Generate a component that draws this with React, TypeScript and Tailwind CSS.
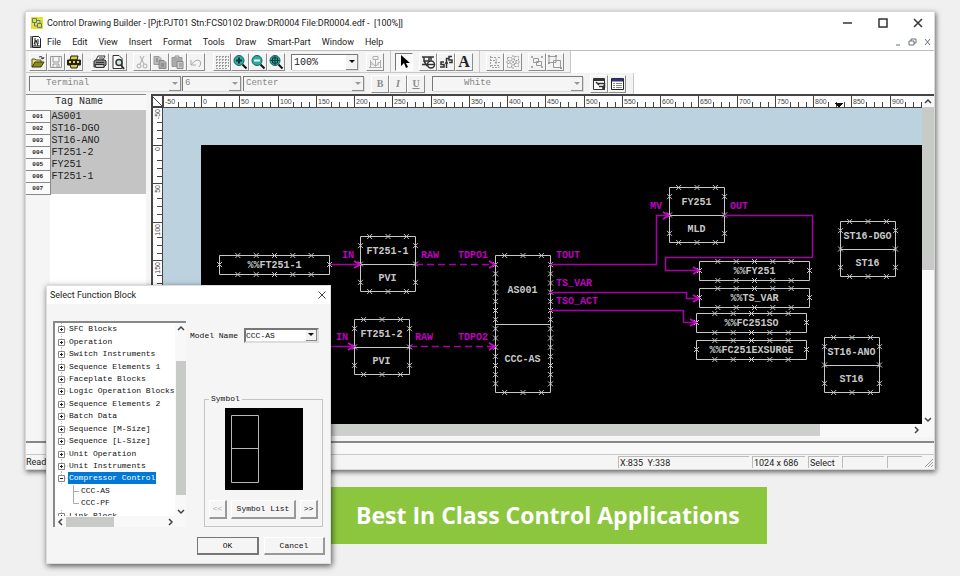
import { Fragment, useState } from "react";
import type { ReactNode } from "react";
import clsx from "clsx";

const MENUS = ["File", "Edit", "View", "Insert", "Format", "Tools", "Draw", "Smart-Part", "Window", "Help"];

const TAGS = ["AS001", "ST16-DGO", "ST16-ANO", "FT251-2", "FY251", "FT251-1", ""];

const TREE = [
    "SFC Blocks",
    "Operation",
    "Switch Instruments",
    "Sequence Elements 1",
    "Faceplate Blocks",
    "Logic Operation Blocks",
    "Sequence Elements 2",
    "Batch Data",
    "Sequence [M-Size]",
    "Sequence [L-Size]",
    "Unit Operation",
    "Unit Instruments",
    "Compressor Control",
    "Link Block",
];

/* ---------- Icons ---------- */

function Icon({ children }: { children: ReactNode }) {
    return (
        <svg width="16" height="16" viewBox="0 0 16 16" fill="none" stroke="#333" aria-hidden="true">
            {children}
        </svg>
    );
}

const OpenIcon = () => (
    <Icon>
        <path d="M2 13V5h3l1 1h5v2" fill="#e8e070" stroke="#5a5620" />
        <path d="M2 13l3-5h9l-3 5z" fill="#8a8a20" stroke="#3c3a10" />
        <path d="M9 3q3-2 4 2M11 4l2 1 1-2" />
    </Icon>
);

const SaveIcon = () => (
    <Icon>
        <path d="M2.5 2.5h11v11h-11z" stroke="#999" />
        <path d="M5 3v5h6V3M5 13v-3h6v3M9 11v2" stroke="#999" />
    </Icon>
);

const YellowPrintIcon = () => (
    <Icon>
        <path d="M5 2h7l-1 4H4z" fill="#d9cf2e" stroke="#222" />
        <path d="M1.5 6h13v5h-13z" fill="#222" stroke="#222" />
        <path d="M3 8h2M7 8h2M11 8h2" stroke="#e6dc3a" strokeWidth="2" />
        <path d="M4 10.5h8l-1 3.500H5z" fill="#d9cf2e" stroke="#222" />
    </Icon>
);

const PrintIcon = () => (
    <Icon>
        <path d="M6 2h7l-2 4H4z" fill="#fff" />
        <path d="M2 7l2-1h9l1 1v4l-2 2H2z" fill="#8a8a8a" />
        <path d="M3 10.5h9v3H4z" fill="#ccc" />
        <path d="M7 4h4M4 8.500h8" />
    </Icon>
);

const PreviewIcon = () => (
    <Icon>
        <path d="M3 1.5h6l3 3v10H3z" fill="#fff" />
        <circle cx="9" cy="8.5" r="3" fill="#cfe6e6" strokeWidth="1.5" />
        <path d="M11 11l3 4" strokeWidth="2" />
    </Icon>
);

const CutIcon = () => (
    <Icon>
        <path d="M6 2l4 8M10 2L6 10" stroke="#aaa" />
        <circle cx="5" cy="12" r="2" stroke="#aaa" />
        <circle cx="11" cy="12" r="2" stroke="#aaa" />
    </Icon>
);

const CopyIcon = () => (
    <Icon>
        <path d="M2 2.5h5l2 2v6H2z" fill="#bbb" stroke="#999" />
        <path d="M7 6.5h5l2 2v6H7z" fill="#aaa" stroke="#888" />
        <path d="M4 5h2M4 7h2M9 10h3M9 12h3" stroke="#777" />
    </Icon>
);

const PasteIcon = () => (
    <Icon>
        <path d="M2 3.5h10v9H2z" fill="#aaa" stroke="#999" />
        <path d="M5 2h4v2H5z" fill="#ddd" stroke="#999" />
        <path d="M7 7.5h6v7H7z" fill="#ccc" stroke="#888" />
        <path d="M9 10h3M9 12h3" stroke="#888" />
    </Icon>
);

const UndoIcon = () => (
    <Icon>
        <path d="M3 6v5h5M3 11q5-7 9-4q2 3-1 6" stroke="#aaa" />
    </Icon>
);

const GridIcon = () => (
    <Icon>
        <path
            d="M2.500 2v12M5.500 2v12M8.500 2v12M11.500 2v12M14.500 2v12M2 2.500h12M2 5.500h12M2 8.500h12M2 11.500h12M2 14.500h12"
            stroke="#999"
            strokeDasharray="2 1"
        />
    </Icon>
);

function ZoomIcon({ kind }: { kind: "in" | "out" | "fit" }) {
    return (
        <Icon>
            <circle cx="7" cy="6.5" r="5" fill="#2fa9a4" stroke="#17605e" />
            <path d="M10.500 10.500l4 4" stroke="#111" strokeWidth="2" />
            {kind === "in" && <path d="M4 6.500h6M7 3.500v6" stroke="#053838" strokeWidth="2" />}
            {kind === "out" && <path d="M4 6.500h6" stroke="#e2f6f6" strokeWidth="2" />}
            {kind === "fit" && <path d="M4.500 4h5v5h-5zM7 2v9M2.500 6.500h9" stroke="#053838" />}
        </Icon>
    );
}

const DownloadIcon = () => (
    <Icon>
        <path d="M3.500 6v8M13.500 6v8M2 13.500h13M8.500 6v6M6 5.500h5v-3H6zM3 8.500h2v3M13 8.500h-2v3M6 9.500l2.500 3 2.500-3" stroke="#b0b0b0" />
    </Icon>
);

const PointerIcon = () => (
    <Icon>
        <path d="M5 1v11l3-3 2 5 2-1-2-4h4z" fill="#000" stroke="none" />
    </Icon>
);

const BlockIcon = () => (
    <Icon>
        <path d="M2 3h12M4 3v4h5V3M2 10.500h5M11 3.500v3M4 7l3 5" strokeWidth="1.500" />
        <circle cx="11" cy="10.5" r="3.500" fill="#fff" strokeWidth="1.500" />
        <path d="M8 10.500h6" strokeWidth="1.500" />
    </Icon>
);

const WireIcon = () => (
    <Icon>
        <path d="M6 8H3v2.500h3V13H2M8.500 14V4.500H11M7 9h3M14 2.500h-3V6h3v2.500h-3" strokeWidth="1.500" />
    </Icon>
);

const AlignIcon = () => (
    <Icon>
        <path d="M3.500 2v12M4 3.500h5v3H4M4 11.500h8v2H4M8 8.500h6M10 6.500L8 8.500l2 2M11 3.500h3" stroke="#a0a0a0" strokeDasharray="2 1" />
    </Icon>
);

const DistributeIcon = () => (
    <Icon>
        <path d="M2.500 3.500h4v3h-4zM9.500 2.500h4v4h-4zM2.500 9.500h4v4h-4zM9.500 9.500h4v3h-4zM8 1v14M1 8h14" stroke="#a0a0a0" strokeDasharray="2 1" />
    </Icon>
);

const GroupIcon = () => (
    <Icon>
        <path d="M2 2h2v2H2zM12 2h2v2h-2zM2 12h2v2H2zM12 12h2v2h-2z" fill="#aaa" stroke="none" />
        <path d="M4.500 4.500h5v4h-5zM7.500 7.500h5v4h-5z" stroke="#999" />
    </Icon>
);

const UngroupIcon = () => (
    <Icon>
        <path d="M2 2.500h7v6H2zM6.500 6.500h7v7h-7z" stroke="#999" />
        <path d="M1 1h2v2H1zM13 13h2v2h-2zM8 1h2v2H8zM1 8h2v2H1z" fill="#999" stroke="none" />
    </Icon>
);

const DetailIcon = () => (
    <Icon>
        <path d="M2.500 2.500h11v11h-11z" fill="#fff" />
        <path d="M3 4h10" strokeWidth="2" />
        <path d="M6.500 7.500h7v4M8 10.500h4v2.500M5 6l3 3M13 9v5" strokeWidth="1.500" />
    </Icon>
);

const ListIcon = () => (
    <Icon>
        <path d="M2.500 2.500h12v11h-12z" fill="#fff" stroke="#222" />
        <path d="M3 4h11" stroke="#32327c" strokeWidth="3" />
        <path d="M4 7.500h2M7 7.500h6M4 9.500h2M7 9.500h6M4 11.500h2M7 11.500h6" stroke="#888" />
    </Icon>
);

/* ---------- Toolbar parts ---------- */

function ToolButton({ label, pressed, children }: { label: string; pressed?: boolean; children: ReactNode }) {
    return (
        <button
            type="button"
            aria-label={label}
            title={label}
            className={clsx(
                "flex h-[18px] w-[18px] items-center justify-center overflow-hidden border",
                pressed
                    ? "border-t-[#777] border-r-white border-b-white border-l-[#777] bg-[#fafafa]"
                    : "border-t-white border-r-[#8c8c8c] border-b-[#8c8c8c] border-l-white bg-[#f3f3f3]",
            )}
        >
            {children}
        </button>
    );
}

function Group({ children }: { children: ReactNode }) {
    return <div className="flex shrink-0">{children}</div>;
}

const Separator = () => <div className="w-px shrink-0 self-stretch bg-[#c8c8c8]" />;

type ComboProps = { label: string; value: string; className: string; selectClass?: string; disabled?: boolean };

function Combo({ label, value, className, selectClass, disabled }: ComboProps) {
    return (
        <div className={clsx("flex shrink-0 border-t border-l border-[#777] shadow-[1px_1px_0_#d8d8d8]", disabled ? "bg-[#f5f5f5]" : "bg-white", className)}>
            <select
                aria-label={label}
                disabled={disabled}
                className={clsx(
                    "min-w-0 flex-1 appearance-none bg-transparent opacity-100 outline-none",
                    disabled ? "text-[#858585]" : "text-[#222]",
                    selectClass,
                )}
            >
                <option>{value}</option>
            </select>
            <span className="flex w-[12px] items-center justify-center border-r border-b border-[#8c8c8c] bg-[#f3f3f3]">
                <svg width="6" height="4" viewBox="0 0 6 4" aria-hidden="true">
                    <path d="M0 0h6L3 3z" fill={disabled ? "#999" : "#111"} />
                </svg>
            </span>
        </div>
    );
}

/* ---------- Rulers ---------- */

const STEP = 38.25; // pixels per 50 drawing units

function HorizontalRuler() {
    const marks = Array.from({ length: 20 }, (_, i) => i - 1);
    return (
        <svg className="h-[12px] w-full bg-white font-['Liberation_Sans',sans-serif]" shapeRendering="crispEdges">
            {marks.map((m) => {
                const x = Math.round(38 + m * STEP);
                return (
                    <g key={m} stroke="#444">
                        <path d={`M${x + 0.5} 0v12`} />
                        {[2, 3, 4].map((t) => (
                            <path key={t} d={`M${x + Math.round((t * STEP) / 5) + 0.5} 6v6`} />
                        ))}
                        <text x={x + 2} y="8" fontSize="7" fill="#444" stroke="none">
                            {m * 50}
                        </text>
                    </g>
                );
            })}
            <path d="M0 11.500h4000" stroke="#444" />
            <path d="M672 7h8l-4 5z" fill="#111" />
        </svg>
    );
}

function VerticalRuler() {
    const marks = Array.from({ length: 8 }, (_, i) => i - 1);
    return (
        <svg className="h-full w-[12px] border-l-2 border-[#444] bg-white font-['Liberation_Sans',sans-serif]" shapeRendering="crispEdges">
            {marks.map((m) => {
                const y = Math.round(38 + m * STEP);
                return (
                    <g key={m} stroke="#444">
                        <path d={`M0 ${y + 0.5}h10`} />
                        {[2, 3, 4].map((t) => (
                            <path key={t} d={`M4 ${y + Math.round((t * STEP) / 5) + 0.5}h6`} />
                        ))}
                        <text transform={`translate(7 ${y + 2}) rotate(-90)`} textAnchor="end" fontSize="7" fill="#444" stroke="none">
                            {m * 50}
                        </text>
                    </g>
                );
            })}
            <path d="M9.500 0v1000" stroke="#444" />
        </svg>
    );
}

/* ---------- Control drawing ---------- */

const UNIT = 55 / 6; // distance between terminals

function Terminals({ points }: { points: number[][] }) {
    return <path d={points.map(([x, y]) => `M${x - 2.5} ${y - 2.5}l5 5M${x + 2.5} ${y - 2.5}l-5 5`).join("")} stroke="#c8c8c8" />;
}

function Label({ x, y, children }: { x: number; y: number; children: string }) {
    return (
        <text x={x} y={y} textAnchor="middle" fill="#c8c8c8">
            {children}
        </text>
    );
}

type BlockProps = { x: number; y: number; name: string; model: string; h?: number; split?: number; pins?: number[] };

function Block({ x, y, name, model, h = 55, split = 28, pins = [1, 3, 5] }: BlockProps) {
    const points = [
        ...[1, 3, 5].flatMap((n) => [
            [x + n * UNIT, y],
            [x + n * UNIT, y + h],
        ]),
        ...pins.flatMap((n) => [
            [x, y + n * UNIT],
            [x + 55, y + n * UNIT],
        ]),
    ];
    return (
        <g>
            <path d={`M${x} ${y}h55v${h}h-55zM${x} ${y + split}h55`} stroke="#c8c8c8" />
            <Terminals points={points} />
            <Label x={x + 27} y={y + split / 2 + 3}>
                {name}
            </Label>
            <Label x={x + 27} y={y + (split + h) / 2 + 3}>
                {model}
            </Label>
        </g>
    );
}

function Link({ x, y, name }: { x: number; y: number; name: string }) {
    const points = [
        ...[2, 4, 6, 8, 10].flatMap((n) => [
            [x + n * UNIT, y],
            [x + n * UNIT, y + 19],
        ]),
        [x, y + 9],
        [x + 110, y + 9],
    ];
    return (
        <g>
            <path d={`M${x} ${y}h110v19h-110z`} stroke="#c8c8c8" />
            <Terminals points={points} />
            <Label x={x + 55} y={y + 12}>
                {name}
            </Label>
        </g>
    );
}

const WIRES = [
    "M129 119.500H159",
    "M120 201.500H153",
    "M349 119.500H455.500V70.500H468",
    "M523 70.500H611.500V112.500H464.500V125.500H498",
    "M349 147.500H485.500V153.500H498",
    "M349 165.500H482.500V177.500H495",
];

const ARROWS = [
    [159, 119],
    [153, 201],
    [294, 119],
    [294, 201],
    [468, 70],
    [498, 125],
    [498, 153],
    [495, 177],
];

const SIGNALS: [number, number, string][] = [
    [141, 113, "IN"],
    [135, 195, "IN"],
    [220, 113, "RAW"],
    [214, 195, "RAW"],
    [257, 113, "TDPO1"],
    [257, 195, "TDPO2"],
    [355, 113, "TOUT"],
    [355, 141, "TS_VAR"],
    [355, 159, "TSO_ACT"],
    [449, 64, "MV"],
    [529, 64, "OUT"],
];

function Drawing() {
    return (
        <svg
            className="block h-[279px] w-full bg-black font-['Liberation_Mono',monospace] text-[10px] font-bold"
            fill="none"
            role="img"
            aria-label="Control drawing DR0004"
        >
            <Link x={18.5} y={110.5} name="%%FT251-1" />
            <Block x={159.5} y={91.5} name="FT251-1" model="PVI" />
            <Block x={153.5} y={174.5} name="FT251-2" model="PVI" />
            <Block x={294.5} y={110.5} h={137} split={69} pins={[1, 2, 3, 4, 5, 6, 7, 8, 9, 10, 11, 12, 13, 14]} name="AS001" model="CCC-AS" />
            <Block x={468.5} y={42.5} name="FY251" model="MLD" />
            <Block x={639.5} y={76.5} name="ST16-DGO" model="ST16" />
            <Block x={623.5} y={192.5} name="ST16-ANO" model="ST16" />
            <Link x={498.5} y={116.5} name="%%FY251" />
            <Link x={498.5} y={143.5} name="%%TS_VAR" />
            <Link x={495.5} y={168.5} name="%%FC251SO" />
            <Link x={495.5} y={195.5} name="%%FC251EXSURGE" />
            <g stroke="#a800a8" strokeWidth="1.5">
                {WIRES.map((d) => (
                    <path key={d} d={d} />
                ))}
                <path d="M215 119.500H294M209 201.500H294" strokeDasharray="7 4" />
                {ARROWS.map(([x, y]) => (
                    <path key={`${x}-${y}`} d={`M${x - 6} ${y - 3}l6 3.500l-6 3.500`} stroke="#d800d8" />
                ))}
            </g>
            <g fill="#c000c0">
                {SIGNALS.map(([x, y, text]) => (
                    <text key={`${x}-${y}`} x={x} y={y}>
                        {text}
                    </text>
                ))}
            </g>
        </svg>
    );
}

/* ---------- Scroll arrows ---------- */

const ARROW_PATHS = {
    up: "M1 5l3-3 3 3",
    down: "M1 3l3 3 3-3",
    left: "M5 1L2 4l3 3",
    right: "M3 1l3 3-3 3",
};

function ScrollArrow({ dir }: { dir: keyof typeof ARROW_PATHS }) {
    return (
        <button type="button" aria-label={`Scroll ${dir}`} className="flex h-[11px] w-[11px] shrink-0 items-center justify-center">
            <svg width="8" height="8" viewBox="0 0 8 8" fill="none" stroke="#444" strokeWidth="1.5" aria-hidden="true">
                <path d={ARROW_PATHS[dir]} />
            </svg>
        </button>
    );
}

/* ---------- Main window ---------- */

function TitleBar() {
    return (
        <header>
            <div className="flex h-[22px] items-center pr-[10px] pl-[5px]">
                <svg width="12" height="12" viewBox="0 0 12 12" aria-hidden="true">
                    <path d="M0 0h12v12H0z" fill="#e6e02c" />
                    <path d="M1.500 1.500h4v4h-4zM6.500 6.500h4v4h-4zM3.500 6v3h3M6 3.500h3v3" fill="none" stroke="#5a7a8a" />
                </svg>
                <h1 className="ml-[4px] flex-1 text-[9px] leading-[14px] whitespace-nowrap text-[#222]">
                    Control Drawing Builder - [Pjt:PJT01 Stn:FCS0102 Draw:DR0004 File:DR0004.edf -&nbsp; [100%]]
                </h1>
                <div className="flex gap-[23px]">
                    {["M1 6h9", "M2 2h8v8H2z", "M2 2l8 8M10 2l-8 8"].map((d, i) => (
                        <button key={d} type="button" aria-label={["Minimize", "Maximize", "Close"][i]}>
                            <svg width="12" height="12" viewBox="0 0 12 12" fill="none" stroke="#333" strokeWidth="1.5">
                                <path d={d} />
                            </svg>
                        </button>
                    ))}
                </div>
            </div>
            <nav className="flex h-[17px] items-center border-b border-[#c0c0c0] pl-[4px]">
                <svg width="12" height="14" viewBox="0 0 12 14" fill="none" stroke="#222" aria-hidden="true">
                    <path d="M2.500 1.500h6l2 2v9h-8zM1 1v12M4 9l2-4 2 6M5 3v8M8 4v5M3 11h7" />
                </svg>
                <div className="ml-[5px] flex flex-1 gap-[11px] text-[9px] leading-[12px] text-[#222]">
                    {MENUS.map((menu) => (
                        <button key={menu} type="button" className="whitespace-nowrap">
                            {menu}
                        </button>
                    ))}
                </div>
                <div className="flex gap-[3px]">
                    {["M4 9h4", "M2 5h5v4H2zM4 5V3h5v4H7", "M3 3l5 6M8 3l-5 6"].map((d, i) => (
                        <button key={d} type="button" aria-label={["Minimize drawing", "Restore drawing", "Close drawing"][i]}>
                            <svg width="12" height="12" viewBox="0 0 12 12" fill="none" stroke="#66737c">
                                <path d={d} />
                            </svg>
                        </button>
                    ))}
                </div>
            </nav>
        </header>
    );
}

function Toolbars() {
    return (
        <div className="font-['Liberation_Mono',monospace]">
            <div className="flex">
                <div className="flex h-[22px] items-center border-b border-[#c8c8c8] bg-[#f3f3f3] pl-[3px]">
                    <Group>
                        <ToolButton label="Open"><OpenIcon /></ToolButton>
                        <ToolButton label="Save"><SaveIcon /></ToolButton>
                        <ToolButton label="Print drawing"><YellowPrintIcon /></ToolButton>
                    </Group>
                    <div className="w-2" />
                    <Group>
                        <ToolButton label="Print"><PrintIcon /></ToolButton>
                        <ToolButton label="Preview"><PreviewIcon /></ToolButton>
                    </Group>
                    <div className="w-[6px]" />
                    <Group>
                        <ToolButton label="Cut"><CutIcon /></ToolButton>
                        <ToolButton label="Copy"><CopyIcon /></ToolButton>
                        <ToolButton label="Paste"><PasteIcon /></ToolButton>
                        <ToolButton label="Undo"><UndoIcon /></ToolButton>
                    </Group>
                    <div className="w-2" />
                    <Group>
                        <ToolButton label="Grid"><GridIcon /></ToolButton>
                        <ToolButton label="Zoom in"><ZoomIcon kind="in" /></ToolButton>
                        <ToolButton label="Zoom out"><ZoomIcon kind="out" /></ToolButton>
                        <ToolButton label="Zoom to fit"><ZoomIcon kind="fit" /></ToolButton>
                    </Group>
                    <div className="w-[6px]" />
                    <Combo label="Zoom" value="100%" className="h-[16px] w-[67px]" selectClass="pl-[2px] text-[10px]" />
                    <div className="w-2" />
                    <ToolButton label="Download"><DownloadIcon /></ToolButton>
                    <div className="w-[6px]" />
                    <Separator />
                    <div className="w-[4px]" />
                    <ToolButton label="Select" pressed><PointerIcon /></ToolButton>
                    <div className="w-[6px]" />
                    <Group>
                        <ToolButton label="Function block"><BlockIcon /></ToolButton>
                        <ToolButton label="Wiring"><WireIcon /></ToolButton>
                        <ToolButton label="Text">
                            <span className="font-['Liberation_Serif',serif] text-[16px] leading-[16px] font-bold text-[#222]">A</span>
                        </ToolButton>
                    </Group>
                    <div className="w-[6px]" />
                    <Separator />
                    <div className="w-[6px]" />
                    <Group>
                        <ToolButton label="Align"><AlignIcon /></ToolButton>
                        <ToolButton label="Distribute"><DistributeIcon /></ToolButton>
                    </Group>
                    <div className="w-[6px]" />
                    <Group>
                        <ToolButton label="Group"><GroupIcon /></ToolButton>
                        <ToolButton label="Ungroup"><UngroupIcon /></ToolButton>
                    </Group>
                    <div className="w-[6px]" />
                    <Separator />
                </div>
            </div>
            <div className="flex">
                <div className="flex h-[21px] items-center bg-[#f3f3f3] pl-[3px] text-[9px]">
                    <Combo disabled label="Text style" value="Terminal" className="h-[15px] w-[152px]" selectClass="pl-4" />
                    <div className="w-px" />
                    <Combo disabled label="Text size" value="6" className="h-[15px] w-[59px]" selectClass="pl-[2px]" />
                    <div className="w-[2px]" />
                    <Combo disabled label="Alignment" value="Center" className="h-[15px] w-[121px]" selectClass="pl-[2px]" />
                    <div className="w-[7px]" />
                    <Group>
                        <ToolButton label="Bold"><span className="font-['Liberation_Serif',serif] text-[10px] font-bold text-[#8c8c8c]">B</span></ToolButton>
                        <ToolButton label="Italic"><span className="font-['Liberation_Serif',serif] text-[10px] font-bold text-[#8c8c8c] italic">I</span></ToolButton>
                        <ToolButton label="Underline"><span className="font-['Liberation_Serif',serif] text-[10px] font-bold text-[#8c8c8c] underline">U</span></ToolButton>
                    </Group>
                    <div className="w-[7px]" />
                    <Combo disabled label="Text colour" value="White" className="h-[15px] w-[151px]" selectClass="pl-[31px]" />
                    <div className="w-[7px]" />
                    <Group>
                        <ToolButton label="Details"><DetailIcon /></ToolButton>
                        <ToolButton label="Tag list"><ListIcon /></ToolButton>
                    </Group>
                    <div className="w-[7px]" />
                    <Separator />
                </div>
            </div>
        </div>
    );
}

function TagPane() {
    return (
        <aside className="w-[120px] shrink-0 border-t border-[#888] bg-linear-to-r from-[#f5f5f5] from-20% to-white to-20% font-['Liberation_Mono',monospace] text-[10px] text-[#222]">
            <table className="w-full border-collapse">
                <thead>
                    <tr className="h-[15px] bg-[#f8f8f8] leading-[12px]">
                        <th colSpan={2} className="p-0 pr-[14px] text-center font-normal">Tag Name</th>
                    </tr>
                </thead>
                <tbody>
                    {TAGS.map((tag, i) => (
                        <tr key={i} className="h-[12px] leading-[11px]">
                            <th scope="row" className="w-[24px] border-y border-r border-[#888] bg-[#fafafa] p-0 text-center text-[6px]">
                                {String(i + 1).padStart(3, "0")}
                            </th>
                            <td className="bg-[#c4c4c4] p-0 pl-px">{tag}</td>
                        </tr>
                    ))}
                </tbody>
            </table>
        </aside>
    );
}

function MainWindow() {
    return (
        <section className="border border-[#d8d8d8] bg-white font-['Roboto',sans-serif] shadow-[1px_2px_5px_rgba(0,0,0,0.6)]">
            <TitleBar />
            <Toolbars />
            <div className="flex bg-[#f5f5f5]">
                <TagPane />
                <div className="ml-[5px] flex min-w-0 flex-1 flex-col border-t-2 border-[#444]">
                    <div className="flex">
                        <div className="flex w-[12px] shrink-0 flex-col">
                            <svg className="h-[11px] w-[12px] border-l-2 border-[#444] bg-white" viewBox="0 0 10 11" stroke="#444" fill="none" aria-hidden="true">
                                <path d="M0 1l9 9M9.500 0v11M0 10.500h10" />
                            </svg>
                            <div className="h-0 min-h-0 flex-1">
                                <VerticalRuler />
                            </div>
                        </div>
                        <div className="flex min-w-0 flex-1 flex-col">
                            <HorizontalRuler />
                            <div className="bg-[#bcd2df] pt-[37px] pl-[38px]">
                                <Drawing />
                            </div>
                        </div>
                        <div className="flex w-[12px] shrink-0 flex-col items-center bg-[#f8f8f8]">
                            <ScrollArrow dir="up" />
                            <div className="h-[163px] w-full bg-[#c8cac8]" />
                            <div className="flex-1" />
                            <ScrollArrow dir="down" />
                        </div>
                    </div>
                    <div className="flex h-[13px] bg-[#f8f8f8] pr-[13px]">
                        <ScrollArrow dir="left" />
                        <div className="flex-1">
                            <div className="h-[12px] w-[88%] bg-[#cdcfcd]" />
                        </div>
                        <ScrollArrow dir="right" />
                    </div>
                    <div className="h-[4px]" />
                </div>
            </div>
            <div className="h-[13px] border-t-2 border-[#888] bg-[#f8f8f8]" />
            <footer className="flex h-[15px] items-center gap-[3px] border-t border-[#c8c8c8] bg-[#f5f5f5] pr-[1px] text-[9px] leading-[12px] text-[#222]">
                <span className="flex-1">Ready</span>
                <span className="h-[12px] w-[131px] border-t border-l border-[#bbb] pl-px">X:835&nbsp; Y:338</span>
                <span className="h-[12px] w-[53px] border-t border-l border-[#bbb] pl-px whitespace-nowrap">1024 x 686</span>
                <span className="h-[12px] w-[31px] border-t border-l border-[#bbb] pl-px">Select</span>
                <span className="h-[12px] w-[42px] border-t border-l border-[#bbb]" />
                <span className="h-[12px] w-[35px] border-t border-l border-[#bbb]" />
                <svg width="8" height="10" viewBox="0 0 8 10" stroke="#999" aria-hidden="true">
                    <path d="M0 10l8-8M3 10l5-5M6 10l2-2" />
                </svg>
            </footer>
        </section>
    );
}

/* ---------- Select Function Block dialog ---------- */

function TreeToggle({ open }: { open: boolean }) {
    return (
        <svg className="shrink-0" width="12" height="12" viewBox="0 0 12 12" fill="none" stroke="#888" aria-hidden="true">
            <path d="M5.500 0v3M5.500 9v3M9 6h3" stroke="#bbb" strokeDasharray="1 1" />
            <path d="M2.500 3.500h6v6h-6z" />
            <path d={open ? "M4 6.500h3" : "M4 6.500h3M5.500 5v3"} stroke="#222" />
        </svg>
    );
}

type TreeProps = { model: string; onSelect: (model: string) => void };

function FunctionTree({ model, onSelect }: TreeProps) {
    return (
        <div className="flex h-[206px] w-[133px] shrink-0 flex-col border-t-2 border-l-2 border-[#888] bg-white">
            <div className="flex min-h-0 flex-1">
                <div className="min-w-0 flex-1 overflow-hidden">
                    <ul className="grid h-[199px] auto-rows-fr pl-px leading-[12px]">
                        {TREE.map((name) => {
                            const open = name === "Compressor Control";
                            return (
                                <Fragment key={name}>
                                    <li className="flex items-center">
                                        <TreeToggle open={open} />
                                        <button type="button" className={clsx("px-px whitespace-nowrap", open && "bg-[#0078d7] text-white")}>
                                            {name}
                                        </button>
                                    </li>
                                    {open &&
                                        ["CCC-AS", "CCC-PF"].map((child) => (
                                            <li key={child} className="flex items-center pl-[16px]">
                                                <svg width="9" height="12" viewBox="0 0 9 12" fill="none" stroke="#aaa" aria-hidden="true">
                                                    <path d={child === "CCC-PF" ? "M1.500 0v6.500H7" : "M1.500 0v12M2 6.500h5"} />
                                                </svg>
                                                <button type="button" aria-pressed={child === model} onClick={() => onSelect(child)}>
                                                    {child}
                                                </button>
                                            </li>
                                        ))}
                                </Fragment>
                            );
                        })}
                    </ul>
                </div>
                <div className="flex w-[11px] flex-col items-center bg-[#f8f8f8]">
                    <ScrollArrow dir="up" />
                    <div className="flex-1" />
                    <div className="h-[134px] w-[10px] bg-[#c8cac8]" />
                    <div className="h-[10px]" />
                    <ScrollArrow dir="down" />
                </div>
            </div>
            <div className="flex h-[11px] items-center bg-[#f8f8f8] pr-[11px]">
                <ScrollArrow dir="left" />
                <div className="h-[10px] w-[48px] bg-[#c8cac8]" />
                <div className="flex-1" />
                <ScrollArrow dir="right" />
            </div>
        </div>
    );
}

const RAISED = "border-t border-l border-r-2 border-b-2 border-t-white border-l-white border-r-[#999] border-b-[#999] bg-[#f5f5f5]";

function SelectBlockDialog() {
    const [model, setModel] = useState("CCC-AS");

    return (
        <section
            role="dialog"
            aria-labelledby="dialog-title"
            className="absolute top-[285px] left-[46px] w-[285px] border border-[#ddd] bg-[#f5f5f5] pb-[8px] font-['Liberation_Mono',monospace] text-[8px] text-[#111] shadow-[1px_2px_6px_rgba(0,0,0,0.65)]"
        >
            <header className="flex h-[18px] items-center justify-between bg-white pr-[3px] pl-[3px] font-['Roboto',sans-serif]">
                <h2 id="dialog-title" className="text-[9px] leading-[12px] text-[#222]">Select Function Block</h2>
                <button type="button" aria-label="Close">
                    <svg width="10" height="10" viewBox="0 0 10 10" stroke="#444" aria-hidden="true">
                        <path d="M1.500 1.500l7 7M8.500 1.500l-7 7" />
                    </svg>
                </button>
            </header>
            <div className="flex pt-[17px] pr-[7px] pl-[6px]">
                <FunctionTree model={model} onSelect={setModel} />
                <div className="flex flex-1 flex-col justify-between pl-[4px]">
                    <div className="mt-[7px] flex items-center gap-[6px] leading-[12px]">
                        <label htmlFor="model-name" className="whitespace-nowrap">Model Name</label>
                        <div className="flex h-[15px] w-[75px] border-2 border-t-[#777] border-r-[#ddd] border-b-[#ddd] border-l-[#777] bg-white">
                            <select id="model-name" value={model} onChange={(e) => setModel(e.target.value)} className="min-w-0 flex-1 appearance-none outline-none">
                                <option>CCC-AS</option>
                                <option>CCC-PF</option>
                            </select>
                            <span className="flex w-[11px] items-center justify-center border-r border-b border-[#888] bg-[#f3f3f3]">
                                <svg width="6" height="4" viewBox="0 0 6 4" aria-hidden="true">
                                    <path d="M0 0h6L3 3z" fill="#111" />
                                </svg>
                            </span>
                        </div>
                    </div>
                    <fieldset className="ml-[14px] border border-[#c4c4c4] px-[4px] pt-[3px] pb-[7px]">
                        <legend className="px-[2px] leading-[12px]">Symbol</legend>
                        <svg className="mx-auto block h-[82px] w-[78px] bg-black" viewBox="0 0 78 82" fill="none" stroke="#b8b8b8" role="img" aria-label={`${model} symbol`}>
                            <path d="M6.500 7.500h27v67h-27zM6.500 40.500h27" />
                        </svg>
                        <div className="mt-[10px] flex h-[19px] gap-[4px]">
                            <button type="button" disabled className={clsx(RAISED, "w-[18px] text-[#aaa]")}>&lt;&lt;</button>
                            <button type="button" className={clsx(RAISED, "flex-1 whitespace-nowrap")}>Symbol List</button>
                            <button type="button" className={clsx(RAISED, "w-[18px]")}>&gt;&gt;</button>
                        </div>
                    </fieldset>
                </div>
            </div>
            <div className="mt-[10px] flex justify-end gap-[5px] pr-[5px]">
                <button type="button" className="h-[18px] w-[62px] border border-r-2 border-b-2 border-[#777]">OK</button>
                <button type="button" className={clsx(RAISED, "h-[18px] w-[61px]")}>Cancel</button>
            </div>
        </section>
    );
}

export default function App() {
    return (
        <main className="relative min-h-screen bg-[#f0f0f0] pt-[11px] pr-[25px] pb-8 pl-[25px] font-['Open_Sans',sans-serif]">
            <MainWindow />

            {/* Caption under the window, partly behind the dialog */}
            <p className="mt-[17px] ml-[295px] w-fit bg-[#8cc63f] pt-[13px] pr-[27px] pb-[14px] pl-[36px] text-[23px] leading-[30px] font-bold text-white">
                Best In Class Control Applications
            </p>

            <SelectBlockDialog />
        </main>
    );
}
